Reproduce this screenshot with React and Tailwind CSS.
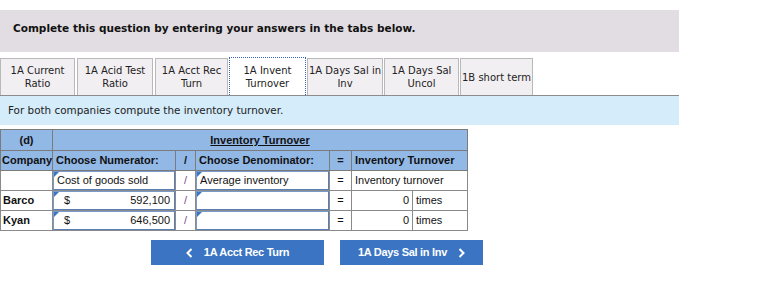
import React from "react";

const tabs = [
  { label: ["1A Current", "Ratio"], w: "w-[75px] mr-[2px]" },
  { label: ["1A Acid Test", "Ratio"], w: "w-[76px] mr-[2px]" },
  { label: ["1A Acct Rec", "Turn"], w: "w-[73px] mr-[1px]" },
  { label: ["1A Invent", "Turnover"], w: "w-[77px] mr-[1px]", active: true },
  { label: ["1A Days Sal in", "Inv"], w: "w-[76px] mr-[1px]" },
  { label: ["1A Days Sal", "Uncol"], w: "w-[75px] mr-[1px]" },
  { label: ["1B short term"], w: "w-[73px]" },
];

function Corner() {
  return (
    <svg className="absolute left-0 top-0" width="5" height="5" viewBox="0 0 5 5">
      <path d="M0 0H5L0 5Z" fill="#3b76c4" />
    </svg>
  );
}

function InputCell({ children, className = "" }) {
  return (
    <td className="border border-[#8a8a8a] p-0 bg-white">
      <div className={`relative h-[19px] border border-[#7a9bc9] border-b-[#5a7fb5] border-r-[#5a7fb5] flex items-center px-[3px] ${className}`}>
        <Corner />
        {children}
      </div>
    </td>
  );
}

function Chevron({ dir }) {
  return (
    <svg width="7" height="10" viewBox="0 0 7 10">
      <path
        d={dir === "left" ? "M5.5 1L1.5 5l4 4" : "M1.5 1l4 4-4 4"}
        fill="none"
        stroke="white"
        strokeWidth="2"
      />
    </svg>
  );
}

export default function App() {
  const rows = [
    { name: "Barco", value: "592,100" },
    { name: "Kyan", value: "646,500" },
  ];

  return (
    <div className="w-[774px] h-[290px] bg-white relative overflow-hidden" style={{ fontFamily: "'DejaVu Sans', Verdana, sans-serif" }}>
      {/* header band */}
      <div className="mt-[10px] w-[679px] h-[42px] bg-[#e1dde2] pt-[11px] pl-[13px] text-[10.5px] font-bold text-[#111]">
        Complete this question by entering your answers in the tabs below.
      </div>

      {/* tabs */}
      <div className="mt-[5px] flex items-end w-[679px] h-[38px]">
        {tabs.map((t, i) => (
          <div
            key={i}
            className={`${t.w} flex flex-col items-center justify-center text-[10px] leading-[13px] text-[#222] ${
              t.active
                ? "h-[38px] bg-white border border-dotted border-[#3b62b8] border-b-0"
                : "h-[37px] bg-[#f2eff2] border border-[#b9b9b9] border-b-0"
            }`}
          >
            {t.label.map((l, j) => (
              <span key={j} className="whitespace-nowrap">{l}</span>
            ))}
          </div>
        ))}
      </div>

      {/* instruction band */}
      <div className="w-[679px] h-[30px] bg-[#d5ecfa] border-t border-[#8c8c8c] flex items-center pl-[8px] text-[10.4px] text-[#222]">
        For both companies compute the inventory turnover.
      </div>

      {/* table */}
      <table
        className="mt-[4px] table-fixed w-[467px] border-collapse text-[11px] text-[#111]"
        style={{ fontFamily: "'Liberation Sans', Arial, sans-serif" }}
      >
        <colgroup>
          <col className="w-[52px]" />
          <col className="w-[123px]" />
          <col className="w-[20px]" />
          <col className="w-[134px]" />
          <col className="w-[22px]" />
          <col className="w-[61px]" />
          <col className="w-[55px]" />
        </colgroup>
        <tbody>
          <tr className="h-[21px] bg-[#92b8e6]">
            <td className="border border-[#7b7b7b] text-center font-bold">(d)</td>
            <td colSpan={6} className="border border-[#7b7b7b] text-center font-bold">
              <span className="underline">Inventory Turnover</span>
            </td>
          </tr>
          <tr className="h-[20px] bg-[#92b8e6] font-bold whitespace-nowrap">
            <td className="border border-[#7b7b7b] px-[1px]">Company</td>
            <td className="border border-[#7b7b7b] px-[3px]">Choose Numerator:</td>
            <td className="border border-[#7b7b7b] text-center">/</td>
            <td className="border border-[#7b7b7b] px-[3px]">Choose Denominator:</td>
            <td className="border border-[#7b7b7b] text-center">=</td>
            <td colSpan={2} className="border border-[#7b7b7b] px-[3px]">Inventory Turnover</td>
          </tr>
          <tr className="h-[20px] bg-white">
            <td className="border border-[#8a8a8a]"></td>
            <InputCell>Cost of goods sold</InputCell>
            <td className="border border-[#8a8a8a] text-center text-[#7a4a8a]">/</td>
            <InputCell>Average inventory</InputCell>
            <td className="border border-[#8a8a8a] text-center">=</td>
            <td colSpan={2} className="border border-[#8a8a8a] px-[3px]">Inventory turnover</td>
          </tr>
          {rows.map((r) => (
            <tr key={r.name} className="h-[20px] bg-white">
              <td className="border border-[#8a8a8a] px-[2px] font-bold">{r.name}</td>
              <InputCell className="justify-between pl-[10px] pr-[4px]">
                <span>$</span>
                <span>{r.value}</span>
              </InputCell>
              <td className="border border-[#8a8a8a] text-center text-[#7a4a8a]">/</td>
              <InputCell />
              <td className="border border-[#8a8a8a] text-center">=</td>
              <td className="border border-[#8a8a8a] text-right px-[3px]">0</td>
              <td className="border border-[#8a8a8a] px-[3px]">times</td>
            </tr>
          ))}
        </tbody>
      </table>

      {/* nav buttons */}
      <div className="mt-[9px] flex" style={{ fontFamily: "'Liberation Sans', Arial, sans-serif" }}>
        <button className="ml-[151px] w-[173px] h-[25px] bg-[#3b74c3] text-white text-[11px] font-bold tracking-[-0.3px] flex items-center justify-center gap-[11px]">
          <Chevron dir="left" />
          <span>1A Acct Rec Turn</span>
        </button>
        <button className="ml-[16px] w-[143px] h-[25px] bg-[#3b74c3] text-white text-[11px] font-bold tracking-[-0.3px] flex items-center justify-center gap-[11px]">
          <span>1A Days Sal in Inv</span>
          <Chevron dir="right" />
        </button>
      </div>
    </div>
  );
}
